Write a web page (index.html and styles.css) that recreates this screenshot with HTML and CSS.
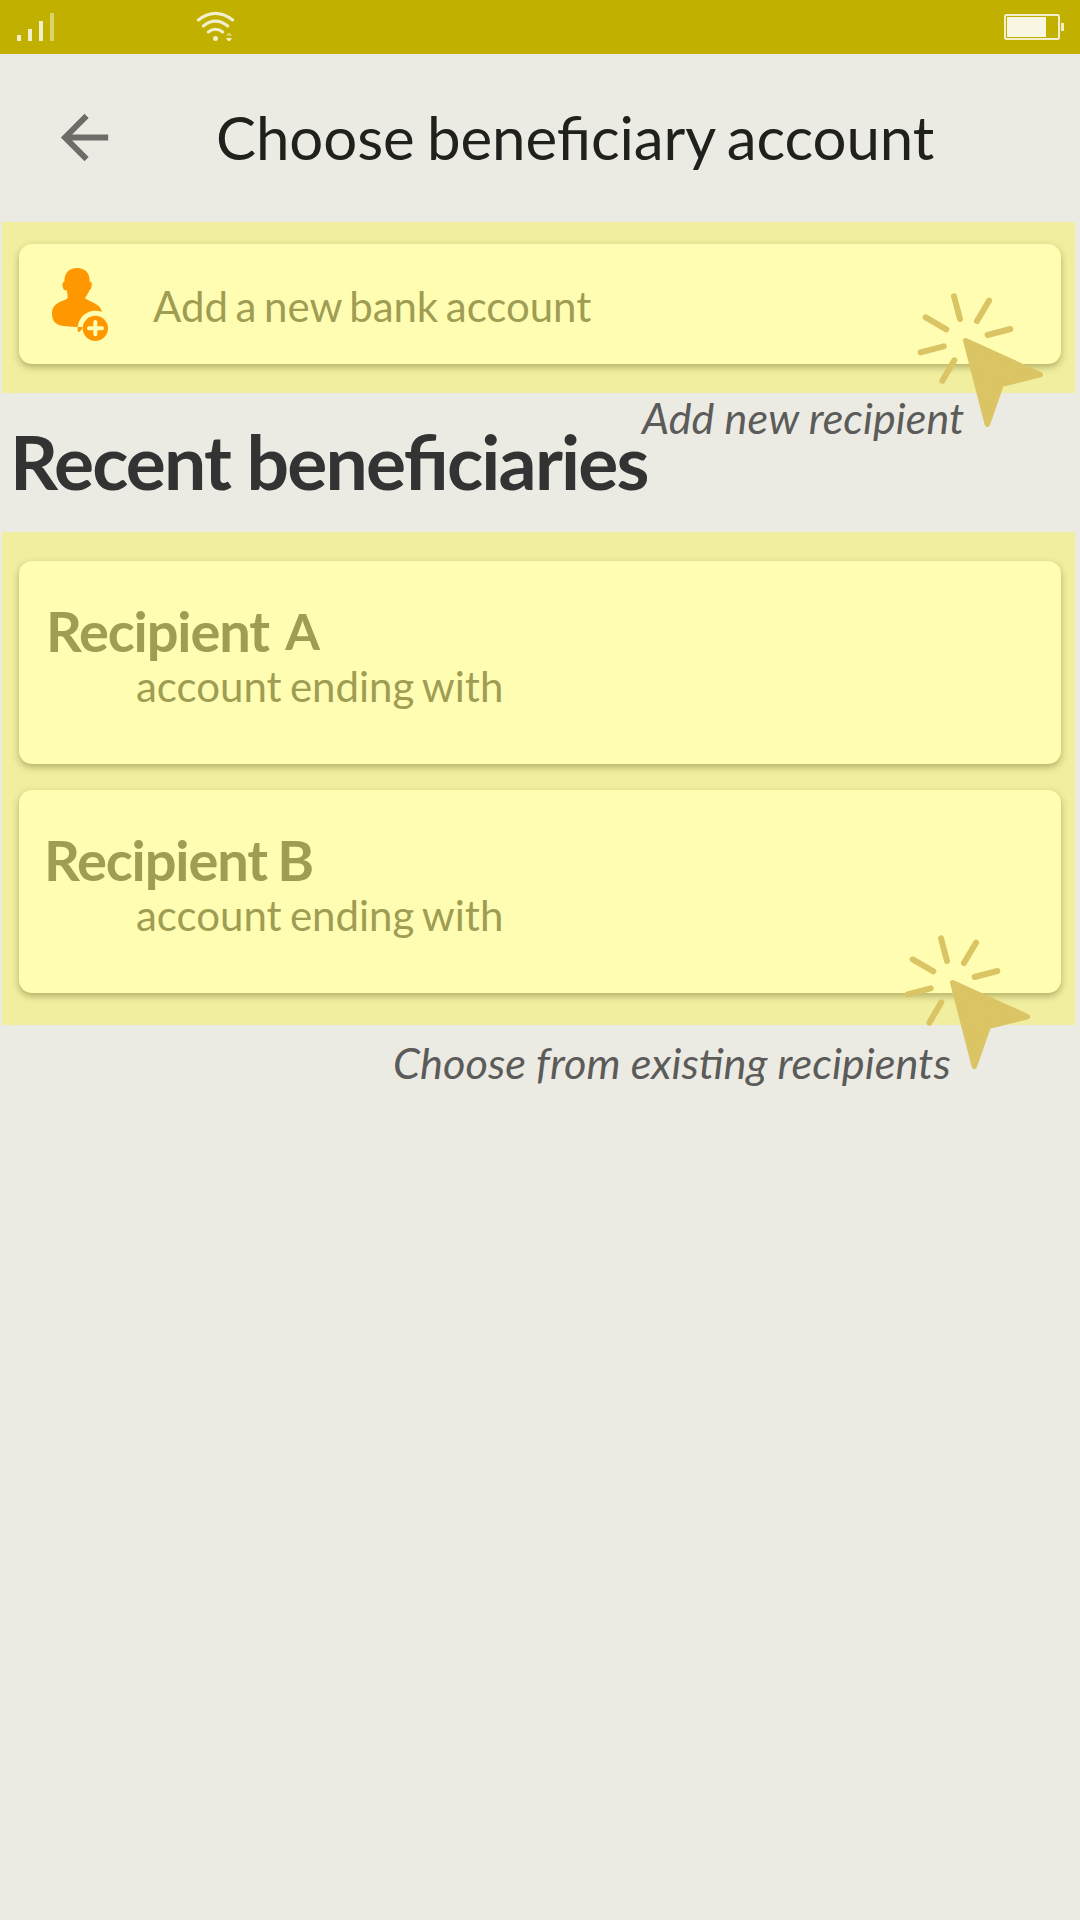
FILE: index.html
```
<!DOCTYPE html>
<html lang="en">
<head>
<meta charset="utf-8">
<title>Choose beneficiary account</title>
<link rel="stylesheet" href="styles.css">
</head>
<body>
<svg class="defs" aria-hidden="true">
  <symbol id="click" viewBox="111 66 384 411">
    <g fill="none" stroke="#dbc464" stroke-width="18" stroke-linecap="round">
      <path d="M222 79 240 147M327 92 291 153M391 177 323 195M137 142 199 178M122 247 191 229M223 271 187 332"/>
    </g>
    <path fill="#dbc464" stroke="#dbc464" stroke-width="16" stroke-linejoin="round" d="M257 212 481 314 364 343 322 463Z"/>
  </symbol>
</svg>
<div class="screen">
  <div class="status">
    <svg class="signal" viewBox="0 0 37 28"><path fill="#f3efcd" d="M0 22h4v6H0zM11 16h4v12h-4zM22 8h4v20h-4z"/><path fill="#dbd26c" d="M33 0h4v28h-4z"/></svg>
    <svg class="wifi" viewBox="588 33 117 93">
      <g fill="none" stroke="#f3efcd" stroke-width="9" stroke-linecap="round"><path d="M595 60Q646 20 698 60M610 78Q646 49 683 78M625 96Q646 80 668 96"/></g>
      <circle cx="646.5" cy="115.500" r="7.500" fill="#f3efcd"/>
      <path fill="#dbd26c" d="M678 107 684 99h6l6 8z"/><path fill="#f3efcd" d="M678 114h18l-6 9h-6z"/>
    </svg>
    <svg class="battery" viewBox="0 0 60 26"><rect x="1" y="1" width="54" height="24" rx="1.500" fill="none" stroke="#f3efcd" stroke-width="2"/><path fill="#f9f7e4" d="M3 3h39v20H3z"/><path fill="#f3efcd" d="M57 9h3v8h-3z"/></svg>
  </div>
  <header class="header">
    <svg class="back" viewBox="0 0 24 24"><path fill="#6d6c69" d="M20 11H7.830l5.590-5.590L12 4l-8 8 8 8 1.410-1.410L7.830 13H20v-2z"/></svg>
    <h1 class="title">Choose beneficiary account</h1>
  </header>
  <section class="band add-band">
    <div class="card add-card">
      <svg class="person" viewBox="150 156 180 222">
        <path fill="#ff9800" d="M231 159C207 159 193 174 193 200C186 201 186 210 190 221C192 226 196 226 199 225C202 233 203 238 203 248C199 260 156 256 156 296C156 321 170 331 193 333Q215 336 250 336L306 293C303 262 262 260 255 248C261 241 266 234 268 225C272 226 276 217 275 204C275 201 272 200 269 200C270 174 255 159 231 159Z"/>
        <circle cx="286" cy="340" r="53" fill="#fffdb1"/>
        <path fill="#ff9800" d="M233 336h15l-1 5-10 11-4-4z"/>
        <circle cx="286" cy="340" r="38" fill="#ff9800"/>
        <path stroke="#fffdb1" stroke-width="12" stroke-linecap="round" d="M267 340h39M286 321v37"/>
      </svg>
      <span class="add-label">Add a new bank account</span>
    </div>
    <span class="hint hint-add">Add new recipient</span>
    <svg class="cursor cursor-add"><use href="#click"/></svg>
  </section>
  <h2 class="recent">Recent beneficiaries</h2>
  <section class="band list-band">
    <article class="card recipient">
      <h3 class="name">Recipient <span class="letter">A</span></h3>
      <p class="account">account ending with</p>
    </article>
    <article class="card recipient second">
      <h3 class="name">Recipient B</h3>
      <p class="account">account ending with</p>
    </article>
    <span class="hint hint-choose">Choose from existing recipients</span>
    <svg class="cursor cursor-choose"><use href="#click"/></svg>
  </section>
</div>
</body>
</html>
```
FILE: styles.css
```
* { box-sizing: border-box; }
body { margin: 0; background: #ecebe3; font-family: Lato, sans-serif; font-feature-settings: "liga" 1; }
h1, h2, h3, p { margin: 0; white-space: nowrap; }
svg { display: block; flex: none; }
.defs { position: absolute; width: 0; height: 0; }
.screen { width: 1080px; height: 1920px; overflow: hidden; }
.status { display: flex; height: 54px; background: #c1b000; align-items: flex-start; padding: 11px 16px 0 17px; }
.signal { width: 37px; height: 28px; margin-top: 2px; }
.wifi { width: 39px; height: 31px; margin-left: 142px; }
.battery { width: 60px; height: 26px; margin: 3px 0 0 auto; }
.header { display: flex; height: 168px; padding: 48px 0 0 48.5px; }
.back { width: 71px; height: 71px; }
.title { margin: -5px 0 0 96.5px; height: 80px; line-height: 80px; font-size: 60px; font-weight: 400; letter-spacing: -.1px; word-spacing: -3px; color: #20201d; }
.band { position: relative; width: 1073px; margin-left: 2px; background: #f1ee9f; }
.add-band { height: 171px; padding: 22px 14px 0 17px; }
.list-band { display: flex; flex-direction: column; gap: 26px; height: 493px; padding: 29px 14px 0 17px; }
.card { background: #fffdb1; border-radius: 13px; box-shadow: 0 3px 7px rgba(70, 65, 0, .36); color: #9f9d54; }
.add-card { display: flex; height: 120px; padding: 23px 0 0 31px; }
.person { width: 60px; height: 74px; }
.add-label { margin-left: 43px; margin-top: 12px; font-size: 42px; line-height: 54px; height: 54px; letter-spacing: -.05px; word-spacing: -3px; }
.recent { height: 139px; padding: 26px 0 0 10px; font-size: 75px; font-weight: 700; line-height: 84px; letter-spacing: -1.8px; color: #333; }
.recipient { height: 203px; padding: 40px 0 0 27px; }
.name { height: 60px; font-size: 56px; font-weight: 700; line-height: 60px; letter-spacing: -1.15px; }
.second .name { margin-left: -2px; word-spacing: -2px; }
.letter { position: relative; top: -2px; margin-left: 4px; font-size: 50px; }
.account { margin: -2px 0 0 90px; font-size: 42px; line-height: 54px; letter-spacing: 0; word-spacing: -2.5px; }
.hint { position: absolute; font-size: 43px; line-height: 54px; font-style: italic; color: #5b5b5a; white-space: nowrap; }
.hint-add { left: 640px; top: 169px; letter-spacing: .1px; }
.hint-choose { left: 391px; top: 503px; font-size: 43.3px; }
.cursor { position: absolute; width: 128px; height: 137px; }
.cursor-add { left: 915px; top: 70px; }
.cursor-choose { left: 902px; top: 402px; }
```
